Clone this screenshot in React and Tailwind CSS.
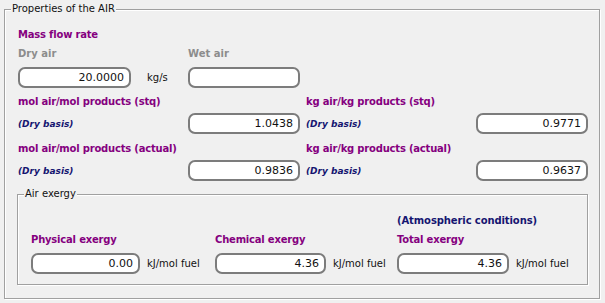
import React from "react";

// Rounded read-only field like the old WinForms boxes
const Field = ({ value = "", className = "" }) => (
  <div
    className={`h-[21px] bg-white border-2 border-[#7c7c7c] rounded-[7px] flex items-center justify-end pr-[5px] text-[11px] leading-[13px] text-[#111] ${className}`}
  >
    {value}
  </div>
);

const Title = ({ children, className = "" }) => (
  <div className={`text-[10px] leading-[12px] font-bold tracking-[-0.2px] text-[#85007f] whitespace-nowrap ${className}`}>
    {children}
  </div>
);

const DryBasis = () => (
  <div className="text-[9px] leading-[12px] font-bold italic text-[#151570] whitespace-nowrap">(Dry basis)</div>
);

const GroupBox = ({ title, className = "", children }) => (
  <div
    className={`relative border border-[#a0a0a0] shadow-[inset_1px_1px_0_#ffffff,1px_1px_0_#ffffff] ${className}`}
  >
    <span className="absolute -top-[7px] left-[6px] px-[1px] bg-[#f0f0f0] text-[10px] leading-[12px] text-[#111]">
      {title}
    </span>
    {children}
  </div>
);

const App = () => {
  return (
    <div className="w-[605px] h-[303px] bg-[#f0f0f0] overflow-hidden font-['DejaVu_Sans',sans-serif] pt-[9px] pl-[4px]">
      <GroupBox title="Properties of the AIR" className="w-[596px] h-[290px] pl-[12px]">
        {/* Mass flow + ratios */}
        <div className="pl-[1px] pt-[19px]">
          <Title>Mass flow rate</Title>

          <div className="grid grid-cols-[170px_auto] mt-[7px] text-[10px] leading-[12px] font-bold text-[#8c8c8c]">
            <div>Dry air</div>
            <div>Wet air</div>
          </div>

          <div className="grid grid-cols-[170px_auto] mt-[7px] items-center">
            <div className="flex items-center">
              <Field value="20.0000" className="w-[113px]" />
              <span className="ml-[16px] text-[10px] text-[#111]">kg/s</span>
            </div>
            <Field className="w-[112px]" />
          </div>

          <div className="grid grid-cols-[288px_auto] mt-[8px]">
            <Title>mol air/mol products (stq)</Title>
            <Title>kg air/kg products (stq)</Title>
          </div>
          <div className="grid grid-cols-[170px_118px_170px_auto] mt-[5px] items-center">
            <DryBasis />
            <Field value="1.0438" className="w-[112px]" />
            <DryBasis />
            <Field value="0.9771" className="w-[112px]" />
          </div>

          <div className="grid grid-cols-[288px_auto] mt-[9px]">
            <Title>mol air/mol products (actual)</Title>
            <Title>kg air/kg products (actual)</Title>
          </div>
          <div className="grid grid-cols-[170px_118px_170px_auto] mt-[5px] items-center">
            <DryBasis />
            <Field value="0.9836" className="w-[112px]" />
            <DryBasis />
            <Field value="0.9637" className="w-[112px]" />
          </div>
        </div>

        {/* Air exergy */}
        <GroupBox title="Air exergy" className="mt-[13px] w-[571px] h-[91px] pl-[13px] pt-[20px]">
          <div className="grid grid-cols-[184px_182px_auto]">
            <div />
            <div />
            <div className="text-[10px] leading-[12px] font-bold tracking-[-0.1px] text-[#151570] whitespace-nowrap">
              (Atmospheric conditions)
            </div>
          </div>
          <div className="grid grid-cols-[184px_182px_auto] mt-[7px]">
            <Title>Physical exergy</Title>
            <Title>Chemical exergy</Title>
            <Title>Total exergy</Title>
          </div>
          <div className="grid grid-cols-[184px_182px_auto] mt-[7px]">
            {[
              ["0.00", "w-[109px]"],
              ["4.36", "w-[111px]"],
              ["4.36", "w-[112px]"],
            ].map(([v, w], i) => (
              <div key={i} className="flex items-center">
                <Field value={v} className={w} />
                <span className="ml-[7px] text-[10px] text-[#111] whitespace-nowrap">kJ/mol fuel</span>
              </div>
            ))}
          </div>
        </GroupBox>
      </GroupBox>
    </div>
  );
};

export default App;
